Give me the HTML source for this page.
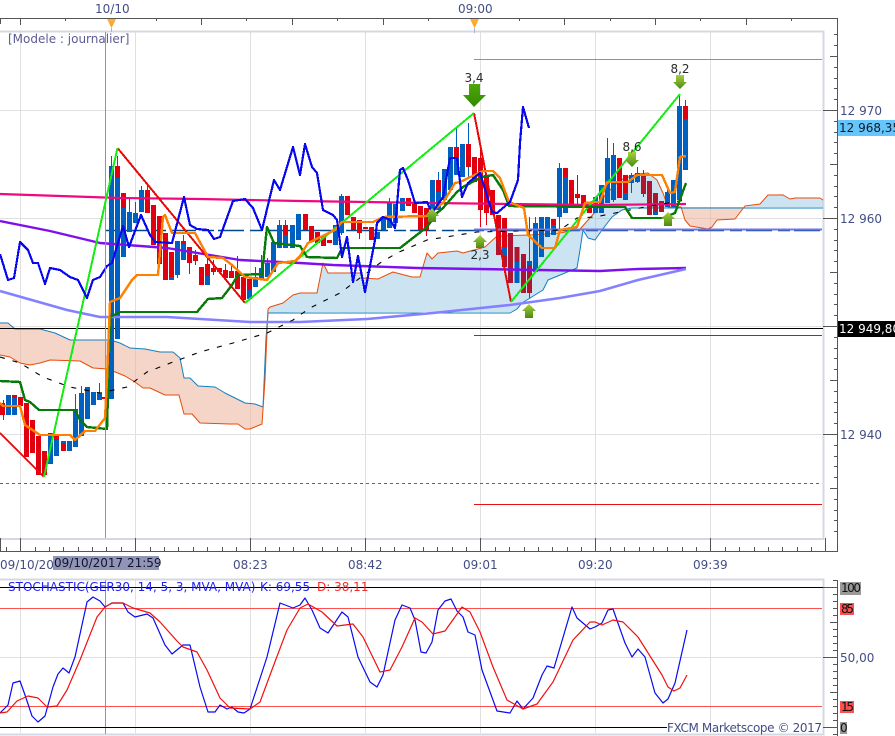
<!DOCTYPE html>
<html><head><meta charset="utf-8"><title>Chart</title>
<style>
html,body{margin:0;padding:0;background:#fff;width:895px;height:736px;overflow:hidden}
svg{display:block;font-family:"DejaVu Sans","Liberation Sans",sans-serif;font-size:12px}
.t{fill:#434d85}
.n{fill:none;stroke-linejoin:round}
.j{fill:none;stroke-linejoin:round;shape-rendering:crispEdges}
.b{fill:none;stroke-width:5;shape-rendering:crispEdges}
</style></head><body>
<svg width="895" height="736" viewBox="0 0 895 736" xmlns="http://www.w3.org/2000/svg">
<defs>
<linearGradient id="g1" x1="0" y1="0" x2="0" y2="1"><stop offset="0" stop-color="#4fa808"/><stop offset="1" stop-color="#2f8a00"/></linearGradient>
<linearGradient id="g2" x1="0" y1="0" x2="0" y2="1"><stop offset="0" stop-color="#a6d040"/><stop offset="1" stop-color="#4a8a10"/></linearGradient>
<linearGradient id="g3" x1="0" y1="0" x2="0" y2="1"><stop offset="0" stop-color="#ffb040"/><stop offset="1" stop-color="#ff9a10"/></linearGradient>
</defs>
<rect width="895" height="736" fill="#fff"/>

<!-- grids -->
<path d="M20.5 32V538M135.5 32V538M250.5 32V538M365.5 32V538M480.5 32V538M595.5 32V538M710.5 32V538M0 110.5H822M0 218.5H822M0 326.5H822M0 434.5H822" stroke="#e0e0e0" fill="none"/>
<path d="M20.5 580V733M135.5 580V733M250.5 580V733M365.5 580V733M480.5 580V733M595.5 580V733M710.5 580V733M0 657.5H822" stroke="#e0e0e0" fill="none"/>

<!-- panel frames -->
<path d="M0 31.5H823.5V539H0" fill="none" stroke="#d4d8e2" stroke-width="2"/>
<path d="M0 579.5H823.5V734.5H0" fill="none" stroke="#d4d8e2" stroke-width="2"/>

<!-- cloud -->
<polygon fill="#eeb29c" fill-opacity=".55" points="0,323 8,323 15,329 40,329 55,333 70,340 110,340 120,343 130,348 145,349 160,352 173,352 180,358 184,378 190,378 198,386 215,387 225,393 245,403 255,404 263,407 263,414 262,424 250,429 245,429 238,424 230,424 200,423 192,414 184,414 179,395 165,395 150,388 143,388 135,382 125,376 108,369 93,368 80,361 50,360 40,363 30,365 20,363 10,357 0,355"/>
<polygon fill="#8fc3e3" fill-opacity=".46" points="268,309 270,307 283,303 293,295 300,293 317,293 323,263 328,273 360,273 363,278 378,279 393,272 412,277 420,277 427,253 432,259 438,253 457,251 463,253 485,247 497,236 530,235 560,233 580,229 597,210 605,195 620,180 637,174 648,173 657,180 663,193 668,207 681,207 632,208 622,210 612,217 602,230 595,240 588,238 583,230 580,250 577,268 548,280 543,290 522,303 517,309 510,312 300,312 268,313"/>
<polygon fill="#eeb29c" fill-opacity=".55" points="681,207 745,207 735,219 717,220 712,227 708,229 690,226 685,220"/>
<polygon fill="#8fc3e3" fill-opacity=".46" points="745,207 760,204 768,195 783,194 790,199 795,198 820,198 823,200 823,207"/>
<path class="n" stroke="#1280c0" d="M0 323H8L15 329H40L55 333L70 340H110L120 343L130 348L145 349L160 352H173L180 358L184 378H190L198 386L215 387L225 393L245 403L255 404L263 407L266 338L268 313H510L517 309L522 303L543 290L548 280L577 268L580 250L583 230L588 238L595 240L602 230L612 217L622 210L632 208H823"/>
<path class="n" stroke="#e84c08" d="M0 355L10 357L20 363L30 365L40 363L50 360L80 361L93 368L108 369L125 376L135 382L143 388H150L165 395H179L184 414H192L200 423L230 424L238 424L245 429H250L262 424L265 380L268 309L270 307L283 303L293 295L300 293L317 293L323 263L328 273H360L363 278L378 279L393 272L412 277H420L427 253L432 259L438 253L457 251L463 253L485 247L497 236L530 235L560 233L580 229L597 210L605 195L620 180L637 174L648 173L657 180L663 193L668 207H681L685 220L690 226L708 229L712 227L717 220L735 219L745 206L760 204L768 195H783L790 199L795 198H820L823 200"/>

<!-- horizontal levels -->
<path d="M474 59.5H822" stroke="#24e024"/>
<path d="M0 328.5H823" stroke="#000"/>
<path d="M474 335.5H822" stroke="#d81010"/>
<path d="M474 504.5H822" stroke="#e81010"/>
<path d="M0 483.5H822" stroke="#1280c0" stroke-dasharray="3 3"/>
<path d="M106 230.5H822" stroke="#00488c" stroke-width="1.4" stroke-dasharray="12 4 26 6"/>

<!-- candle wicks -->
<path fill="none" stroke="#0060c0" d="M75.5 394V409M81.5 386V393M99.5 383V400M111.5 156V166M117.5 156V166M129.5 198V232M135.5 202V223M141.5 186V212M147.5 185V190M177.5 241V278M183.5 235V260M255.5 267V287M261.5 255V280M267.5 258V277M279.5 220V248M285.5 220V248M341.5 194V235M389.5 198V228M438.5 172V200M456.5 128V175M468.5 123V177M529.5 217V298M535.5 217V262M559.5 163V233M613.5 143V202M607.5 138V202M631.5 173V193M637.5 167V183M667.5 187V207M679.5 94V200M685.5 100V170"/>
<path fill="none" stroke="#e00010" d="M3.5 400V420M189.5 247V274M195.5 250V265M207.5 258V282M213.5 260V275M225.5 264V278M231.5 264V278M237.5 256V289M243.5 275V302M371.5 227V239M359.5 220V239M426.5 208V236M480.5 150V227M486.5 176V225M577.5 175V207M643.5 170V197"/>

<!-- candles: blue bodies -->
<path class="b" stroke="#0060c0" d="M8.5 395V415M14.5 398V415M50.5 436V464M56.5 438V456M63.5 441V451M69.5 441V451M75.5 409V447M81.5 393V436M87.5 387V419M93.5 392V405M99.5 393V400M111.5 166V399M117.5 178V339M123.5 208V257M129.5 212V232M135.5 213V223M141.5 190V212M171.5 277V280M177.5 241V275M183.5 244V260M207.5 276V285M249.5 290V299M255.5 277V287M261.5 268V280M267.5 263V277M273.5 242V272M279.5 225V248M285.5 235V248M292.5 225V248M298.5 214V240M335.5 225V245M341.5 196V233M377.5 232V239M383.5 217V230M389.5 202V228M395.5 204V223M402.5 198V211M432.5 180V210M438.5 192V210M444.5 169V200M450.5 147V190M456.5 157V175M462.5 144V177M504.5 247V256M517 262V283M529.5 261V265M535.5 223V272M541.5 217V257M547.5 217V237M553.5 225V235M559.5 168V217M565.5 177V213M595.5 197V213M601.5 185V213M607.5 158V203M613.5 155V200M625.5 193V200M631.5 175V183M637.5 173V182M655.5 212V215M667.5 192V207M673.5 180V207M679.5 106V200M685.5 119V170"/>
<!-- candles: red bodies -->
<path class="b" stroke="#e00010" d="M2.5 403V415M14.5 395V398M20.5 397V406M26.5 403V457M32.5 420V453M38.5 436V475M44.5 451V475M50.5 433V436M56.5 436V440M63.5 443V451M104.5 397V399M117.5 166V178M123.5 193V208M147.5 190V213M153.5 205V245M159.5 216V264M165.5 233V280M171.5 252V277M183.5 241V244M189.5 247V263M195.5 255V261M201.5 267V285M207.5 264V276M213.5 268V272M219.5 268V272M225.5 270V278M231.5 271V278M237.5 271V289M243.5 277V300M249.5 279V290M285.5 225V235M305.5 214V230M311.5 226V242M317.5 232V243M323.5 236V246M329.5 240V243M347.5 196V215M353.5 217V230M359.5 220V233M365.5 227V229M371.5 227V240M408.5 198V206M414.5 203V213M420.5 206V230M426.5 208V230M438.5 180V192M456.5 147V157M468.5 144V167M474.5 157V182M480.5 158V210M486.5 175V213M492.5 190V215M498.5 215V255M504.5 218V247M553.5 219V225M565.5 168V177M571.5 180V204M577.5 194V198M583.5 195V207M589.5 208V213M619.5 158V198M625.5 175V193M685.5 106V119"/>
<!-- candles: dark red bodies in cloud -->
<path class="b" stroke="#b01530" d="M498.5 240V255M504.5 256V267M510.5 233V283M517 247V262M523.5 254V293M529.5 265V293M643.5 176V194M649.5 181V215M655.5 193V212M661.5 201V212"/>

<!-- long MA lines -->
<polyline class="n" stroke="#f0087f" stroke-width="2.2" points="0,194 60,196 120,198 200,199 300,201 433,203 510,204 595,205 686,204"/>
<polyline class="n" stroke="#7f10ee" stroke-width="2.4" points="0,221 50,231 100,243 167,248 240,260 300,263 333,265 417,268 600,271 638,269 686,268"/>
<polyline class="n" stroke="#8480ff" stroke-width="2.6" points="0,291 67,310 100,317 167,317 250,322 300,322 367,319 433,313 510,305 560,298 600,291 638,280 686,269"/>
<path d="M474 229.5H822" stroke="#7474ea" stroke-width="2"/>

<!-- dashed black -->
<polyline class="n" stroke="#000" stroke-width="1.1" stroke-dasharray="5 8" points="0,357 20,363 43,377 70,387 100,393 127,387 147,372 173,362 200,352 233,343 267,333 293,320 310,308 340,293 380,263 397,253 427,240 477,232 560,230 577,218 595,217 645,207 685,200"/>

<!-- zigzag -->
<path class="j" stroke="#e80808" stroke-width="2" d="M0 433L44 477M117.5 148L245 303M474 113L511 302"/>
<path class="j" stroke="#12ee12" stroke-width="2" d="M44 477L117.5 148M245 303L474 113M511 302L680 94"/>

<!-- kijun green -->
<polyline class="j" stroke="#067a06" stroke-width="2.4" points="0,381 20,382 25,400 30,402 39,410 75,410 80,420 87,427 107,429 110,317 120,312 197,312 208,299 222,298 232,285 238,275 262,274 267,227 274,243 300,246 307,257 337,258 342,248 400,248 427,227 437,213 443,208 457,192 463,187 482,177 493,175 503,190 509,206 595,207 625,207 632,218 663,218 675,213 686,183"/>
<!-- tenkan orange -->
<polyline class="j" stroke="#ff8000" stroke-width="2.4" points="0,403 3,406 20,406 25,425 40,435 70,435 75,440 85,431 95,431 105,418 107,380 110,302 120,298 132,280 137,275 158,275 163,217 165,215 172,233 195,233 208,257 223,258 232,265 245,277 267,280 278,263 295,261 300,256 308,243 335,230 342,222 373,222 383,217 428,216 437,207 443,203 455,183 460,182 483,171 493,171 500,178 509,202 524,208 528,235 542,248 555,248 560,230 577,227 585,203 595,202 600,202 607,182 628,182 637,175 662,175 670,193 675,192 680,157 686,156"/>
<!-- chikou blue -->
<polyline class="j" stroke="#0808f0" stroke-width="2.2" points="0,254 8,280 14,278 20,242 28,250 33,263 38,263 45,284 50,268 60,270 70,277 78,280 87,298 93,280 100,277 107,266 112,263 123,226 129,247 141,215 150,235 155,242 172,243 184,197 190,225 197,229 208,230 214,239 220,237 233,201 245,199 253,208 262,230 274,180 280,190 293,147 300,175 305,144 312,167 317,173 323,210 333,215 337,220 342,257 347,237 353,282 358,256 365,292 375,240 377,223 383,217 390,220 395,228 400,170 403,168 408,180 415,203 427,202 432,213 443,197 450,158 457,158 462,197 468,183 480,173 492,212 497,213 510,202 518,180 520,143 523,107 529,128"/>

<!-- crosshair -->
<path d="M105.5 32V538M105.5 580V734" stroke="#8d91b8" fill="none"/>

<!-- markers -->
<polygon fill="url(#g1)" points="469,84 480,84 480,95 486,95 474,107 463,95 469,95"/>
<polygon fill="url(#g2)" points="628,152 636,152 636,160 639,160 632,167 625,160 628,160"/>
<polygon fill="url(#g2)" points="676,75 684,75 684,82 687,82 680,89 673,82 676,82"/>
<polygon fill="url(#g2)" points="432,208 439,216 436,216 436,222 428,222 428,216 425,216"/>
<polygon fill="url(#g2)" points="480,235 487,242 484,242 484,248 476,248 476,242 473,242"/>
<polygon fill="url(#g2)" points="529,304 536,311 533,311 533,318 525,318 525,311 522,311"/>
<polygon fill="url(#g2)" points="668,212 675,219 672,219 672,226 664,226 664,219 661,219"/>
<g fill="#2a2a2a" text-anchor="middle">
<text x="474" y="82">3,4</text><text x="480" y="259">2,3</text><text x="632" y="151">8,6</text><text x="680" y="73">8,2</text>
</g>

<!-- top axis -->
<path fill="none" stroke="#555" d="M0 18.5H837.5V552M0.5 18V24M20.5 18V25M65.5 18V21M156.5 18V21M201.5 18V25M246.5 18V21M292.5 18V25M337.5 18V21M383.5 18V25M428.5 18V21M519.5 18V21M564.5 18V25M610.5 18V21M655.5 18V25M700.5 18V21M746.5 18V25M791.5 18V21"/>
<polygon fill="url(#g3)" points="107,19 116,19 111.5,28"/>
<polygon fill="url(#g3)" points="470,19 479,19 474.5,28"/>
<path d="M111.5 28V32M474.5 28V33" stroke="#aab4cc"/>
<text class="t" x="95" y="13">10/10</text>
<text class="t" x="458" y="13">09:00</text>
<text x="8" y="43" fill="#5c5c94">[Modele : journalier]</text>

<!-- right axis main -->
<path fill="none" stroke="#555" d="M823 110.5H837M823 218.5H837M823 326.5H837M823 434.5H837M830 56.5H837M830 164.5H837M830 272.5H837M830 380.5H837M830 488.5H837M834 34.5H837M834 45.5H837M834 67.5H837M834 78.5H837M834 88.5H837M834 99.5H837M834 121.5H837M834 132.5H837M834 142.5H837M834 153.5H837M834 175.5H837M834 186.5H837M834 196.5H837M834 207.5H837M834 229.5H837M834 240.5H837M834 250.5H837M834 261.5H837M834 283.5H837M834 294.5H837M834 304.5H837M834 315.5H837M834 337.5H837M834 348.5H837M834 358.5H837M834 369.5H837M834 391.5H837M834 402.5H837M834 412.5H837M834 423.5H837M834 445.5H837M834 456.5H837M834 466.5H837M834 477.5H837M834 499.5H837M834 510.5H837M834 520.5H837M834 531.5H837"/>
<text class="t" x="840" y="115">12 970</text>
<text class="t" x="840" y="223">12 960</text>
<text class="t" x="840" y="439">12 940</text>
<rect x="838" y="120" width="57" height="16" fill="#66c6fb"/>
<text x="839" y="132" fill="#0a1a2a">12 968,35</text>
<rect x="838" y="321" width="57" height="16" fill="#000"/>
<text x="839" y="333" fill="#fff">12 949,80</text>

<!-- bottom axis -->
<path fill="none" stroke="#555" d="M0 551.5H837M0.5 538V552M20.5 538V552M135.5 538V552M250.5 538V552M365.5 538V552M480.5 538V552M595.5 538V552M710.5 538V552M825.5 538V552M6.5 547V552M35.5 547V552M49.5 547V552M63.5 547V552M78.5 547V552M92.5 547V552M106.5 547V552M121.5 547V552M150.5 547V552M164.5 547V552M178.5 547V552M193.5 547V552M207.5 547V552M222.5 547V552M236.5 547V552M265.5 547V552M279.5 547V552M293.5 547V552M308.5 547V552M322.5 547V552M337.5 547V552M351.5 547V552M380.5 547V552M394.5 547V552M409.5 547V552M423.5 547V552M437.5 547V552M452.5 547V552M466.5 547V552M495.5 547V552M509.5 547V552M524.5 547V552M538.5 547V552M552.5 547V552M567.5 547V552M581.5 547V552M610.5 547V552M624.5 547V552M639.5 547V552M653.5 547V552M667.5 547V552M682.5 547V552M696.5 547V552M725.5 547V552M739.5 547V552M754.5 547V552M768.5 547V552M782.5 547V552M797.5 547V552M811.5 547V552"/>
<text class="t" x="0" y="569">09/10/2017</text>
<rect x="53" y="556" width="106" height="14" fill="#8f94b8"/>
<text x="54" y="567" fill="#14142a">09/10/2017 21:59</text>
<text class="t" x="233" y="569">08:23</text>
<text class="t" x="348" y="569">08:42</text>
<text class="t" x="463" y="569">09:01</text>
<text class="t" x="578" y="569">09:20</text>
<text class="t" x="693" y="569">09:39</text>

<!-- stochastic -->
<path d="M0 587.5H823" stroke="#000"/>
<path d="M0 608.5H822M0 706.5H822" stroke="#ff5050"/>
<path d="M0 727.5H667" stroke="#000"/>
<polyline class="n" stroke="#0a0af0" stroke-width="1.2" points="0,713 8,705 13,683 20,681 25,695 32,716 38,722 45,716 53,687 58,674 63,668 69,673 75,657 87,602 93,597 100,601 105,607 112,603 123,603 128,612 135,617 147,614 153,618 165,645 172,654 183,645 190,645 200,687 208,712 215,712 220,705 227,709 232,707 238,712 244,713 250,709 267,657 280,603 293,608 300,605 305,598 312,610 320,628 328,633 342,612 348,617 358,657 370,682 377,687 383,675 395,620 402,605 410,608 415,620 421,652 426,653 432,642 438,610 445,601 451,599 457,611 463,617 468,632 475,635 482,670 497,711 510,713 517,701 523,709 533,698 542,675 547,666 554,668 572,607 577,618 590,629 595,627 602,623 608,610 613,609 625,643 632,657 638,649 645,657 655,693 663,703 668,699 675,683 687,630"/>
<polyline class="n" stroke="#f01010" stroke-width="1.2" points="0,713 7,712 17,701 28,696 38,698 47,707 57,706 67,690 80,660 97,617 105,607 112,603 123,603 133,608 150,613 160,622 177,641 183,647 197,652 207,670 220,698 230,708 250,709 260,702 273,667 287,630 300,608 308,604 322,612 337,626 353,624 363,637 380,672 390,670 402,647 415,618 422,622 433,634 445,631 462,607 470,612 480,632 493,667 507,700 523,709 537,704 553,682 573,640 590,622 595,622 602,625 613,620 623,622 638,637 662,675 668,687 674,691 680,688 687,675"/>
<text x="8" y="591" fill="#2222f0">STOCHASTIC(GER30, 14, 5, 3, MVA, MVA)</text>
<text x="260" y="591" fill="#2222f0">K: 69,55</text>
<text x="317" y="591" fill="#f03030">D: 38,11</text>
<text class="t" x="667" y="732" textLength="155">FXCM Marketscope © 2017</text>

<!-- right axis stochastic -->
<path fill="none" stroke="#555" d="M837.5 580V736M823 587.5H837M823 657.5H837M823 727.5H837M830 622.5H837M830 692.5H837M833 580.5H837M833 594.5H837M833 601.5H837M833 608.5H837M833 615.5H837M833 629.5H837M833 636.5H837M833 643.5H837M833 650.5H837M833 664.5H837M833 671.5H837M833 678.5H837M833 685.5H837M833 699.5H837M833 706.5H837M833 713.5H837M833 720.5H837M833 734.5H837"/>
<rect x="840" y="582" width="21" height="13" fill="#999"/>
<text x="841" y="592" fill="#111" textLength="20">100</text>
<rect x="840" y="603" width="14" height="12" fill="#ff5050"/>
<text x="841" y="613" fill="#111" textLength="13">85</text>
<text class="t" x="840" y="662">50,00</text>
<rect x="840" y="701" width="14" height="12" fill="#ff5050"/>
<text x="841" y="711" fill="#111" textLength="13">15</text>
<rect x="840" y="722" width="7" height="12" fill="#999"/>
<text x="840" y="732" fill="#111">0</text>
</svg>
</body></html>
